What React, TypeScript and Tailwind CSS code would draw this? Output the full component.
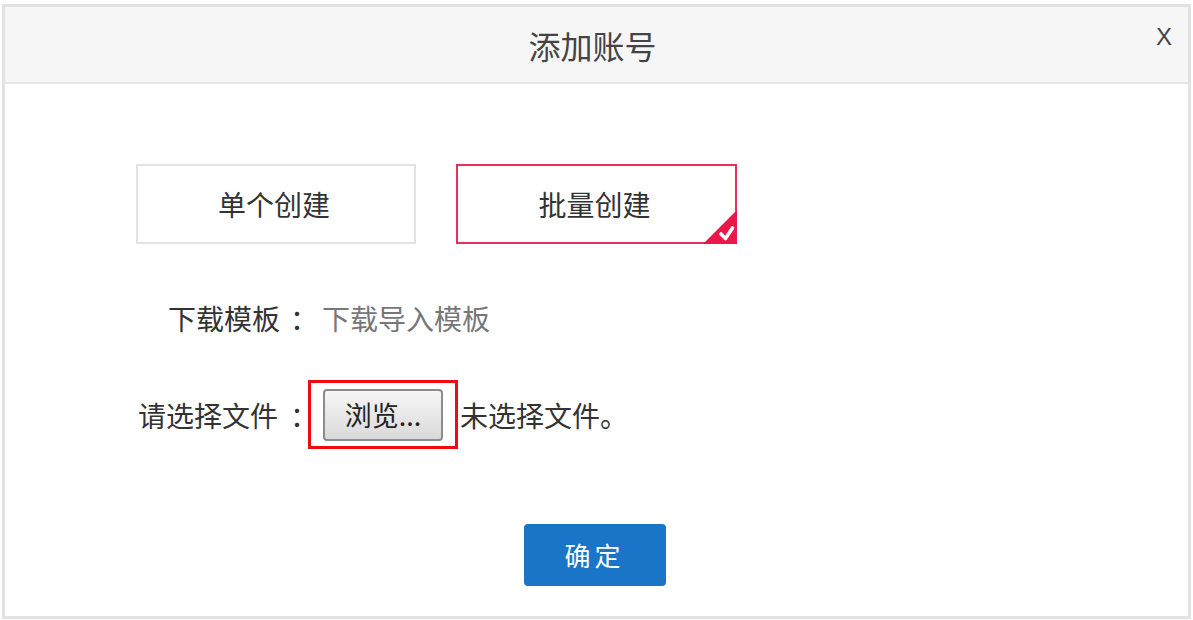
import React from 'react'

const cjk = { fontFamily: '"Noto Sans CJK SC", "Noto Sans", sans-serif' }

export default function App() {
  return (
    <div className="w-[1193px] h-[620px] bg-white pt-[4px] px-[2px] pb-[1px]" style={cjk}>
      <div className="h-full flex flex-col border-[3px] border-[#e2e2e2] bg-white">
        {/* Header */}
        <div className="relative h-[77px] shrink-0 flex items-center justify-center bg-[#f6f6f6] border-b-2 border-[#e6e6e6]">
          <span className="mr-[8px] text-[32px] text-[#444] leading-none">添加账号</span>
          <span
            className="absolute right-[16px] top-[18px] text-[24px] text-[#444] leading-none"
            style={{ fontFamily: '"Liberation Sans", sans-serif' }}
          >
            X
          </span>
        </div>

        {/* Body */}
        <div className="flex-1 flex flex-col pl-[131px] pt-[80px]">
          {/* Mode tabs */}
          <div className="flex gap-[40px]">
            <div className="w-[280px] h-[80px] flex items-center justify-center border-2 border-[#e3e3e3] text-[28px] text-[#333]">
              <span className="mr-[4px]">单个创建</span>
            </div>
            <div className="relative w-[281px] h-[80px] flex items-center justify-center border-2 border-[#e8315a] text-[28px] text-[#333]">
              <span className="mr-[4px]">批量创建</span>
              <svg className="absolute right-[-2px] bottom-[-2px]" width="34" height="34" viewBox="0 0 34 34">
                <polygon points="34,0 34,34 0,34" fill="#e8184a" />
                <path d="M18 24 L22.5 28.5 L29.5 18" stroke="#fff" strokeWidth="3.6" fill="none" strokeLinecap="round" strokeLinejoin="round" />
              </svg>
            </div>
          </div>

          {/* Template row */}
          <div className="mt-[59px] ml-[32px] flex items-center h-[30px] text-[28px] leading-none">
            <span className="text-[#333]">下载模板</span>
            <span className="ml-[10px] text-[#333]">：</span>
            <span className="ml-[4px] text-[#777]">下载导入模板</span>
          </div>

          {/* File row */}
          <div className="mt-[47px] ml-[2px] flex items-center text-[28px] leading-none text-[#333]">
            <span>请选择文件</span>
            <span className="ml-[12px]">：</span>
            <div className="ml-[-10px] w-[150px] h-[69px] flex items-center justify-center border-[3px] border-[#f00a14]">
              <div className="w-[120px] h-[52px] flex items-center justify-center rounded-[4px] border-2 border-[#8c8c8c] bg-gradient-to-b from-[#f6f6f6] to-[#dadada] text-[27px] text-[#222]">
                浏览...
              </div>
            </div>
            <span className="ml-[2px]">未选择文件。</span>
          </div>

          {/* Confirm */}
          <div className="mt-[75px] pr-[135px] flex justify-center">
            <div className="w-[142px] h-[62px] flex items-center justify-center rounded-[4px] bg-[#1a74c8] text-white text-[26px] tracking-[4px] leading-none">
              确定
            </div>
          </div>
        </div>
      </div>
    </div>
  )
}
